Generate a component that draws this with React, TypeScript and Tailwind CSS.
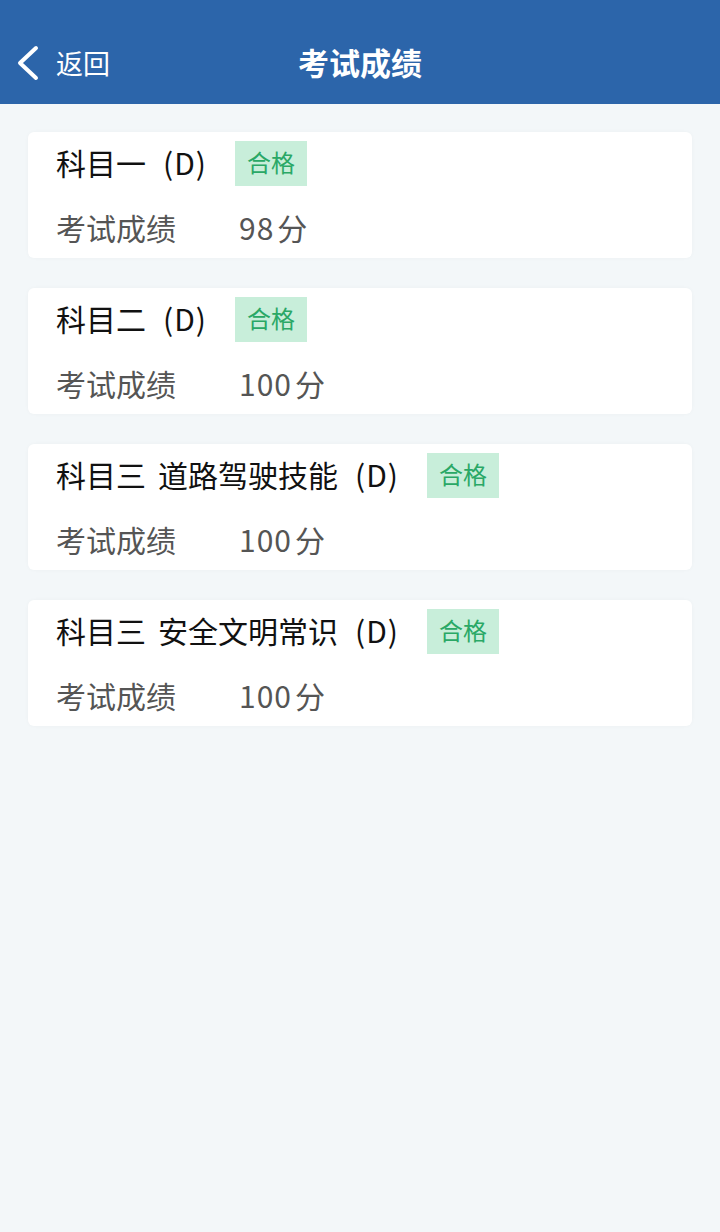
import React from "react";

interface Score {
  name: string[];
  level: string;
  result: string;
  score: number;
}

const scores: Score[] = [
  { name: ["科目一"], level: "(D)", result: "合格", score: 98 },
  { name: ["科目二"], level: "(D)", result: "合格", score: 100 },
  { name: ["科目三", "道路驾驶技能"], level: "(D)", result: "合格", score: 100 },
  { name: ["科目三", "安全文明常识"], level: "(D)", result: "合格", score: 100 },
];

const font = {
  fontFamily: '"Noto Sans CJK SC", "Noto Sans", sans-serif',
};

const ScoreCard = ({ item }: { item: Score }) => (
  <div className="bg-white rounded-md px-[28px] pt-[9px] pb-[11px] shadow-[0_0_4px_rgba(0,0,0,0.03)]">
    <div className="flex items-center h-[45px]">
      <div className="flex items-center mb-[4px] text-[30px] leading-none text-[#111]">
        {item.name.map((part, i) => (
          <span key={i} className={i > 0 ? "ml-[12px]" : ""}>
            {part}
          </span>
        ))}
        <span className="ml-[17px] tracking-[1px]">{item.level}</span>
      </div>
      <span className="ml-[28px] h-[45px] px-[12px] pb-[3px] flex items-center bg-[#c8eeda] text-[#2aa866] text-[24px] leading-none">
        {item.result}
      </span>
    </div>
    <div className="flex items-center h-[40px] mt-[21px] text-[30px] leading-none text-[#555]">
      <span className="w-[183px]">考试成绩</span>
      <span className="tracking-[1px]">{item.score}</span>
      <span className="ml-[3px]">分</span>
    </div>
  </div>
);

const App = () => {
  return (
    <div className="w-[720px] min-h-[1232px] bg-[#f3f7f9]" style={font}>
      {/* Header */}
      <div className="relative h-[104px] pt-[24px] bg-[#2c65aa] flex items-center text-white">
        <div className="flex items-center pl-[15px] mb-[2px]">
          <svg width="26" height="36" viewBox="0 0 26 36" fill="none">
            <polyline
              points="21,3 5,18 21,33"
              stroke="white"
              strokeWidth="4"
              strokeLinecap="round"
              strokeLinejoin="round"
            />
          </svg>
          <span className="ml-[15px] mb-[2px] text-[27px] leading-none">返回</span>
        </div>
        <div className="absolute left-0 right-0 top-[24px] bottom-0 flex items-center justify-center pointer-events-none">
          <span className="mb-[6px] text-[31px] font-semibold leading-none">考试成绩</span>
        </div>
      </div>

      {/* Score list */}
      <div className="flex flex-col gap-[30px] px-[28px] pt-[28px]">
        {scores.map((item) => (
          <ScoreCard key={item.name.join("")} item={item} />
        ))}
      </div>
    </div>
  );
};

export default App;
